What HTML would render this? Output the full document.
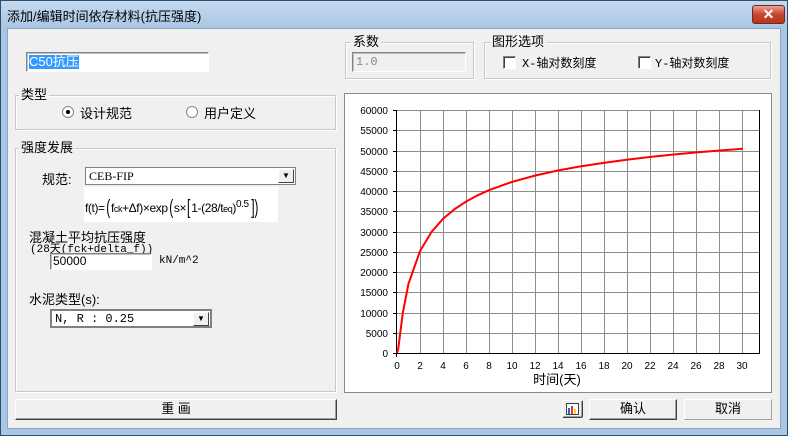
<!DOCTYPE html>
<html><head><meta charset="utf-8"><style>
*{margin:0;padding:0;box-sizing:border-box}
body{width:788px;height:436px;background:#6fa8d0;font-family:"Liberation Sans","Noto Sans CJK SC",sans-serif;font-size:12px;color:#000;position:relative;overflow:hidden}
.win{position:absolute;left:0;top:0;width:788px;height:436px;border:1px solid #2b4f6e;background:linear-gradient(#c5d9ee,#a9c6e4 28px)}
.client{position:absolute;left:7px;top:28px;width:774px;height:401px;background:#f0f0f0;border:1px solid #8aa6c0}
.a{position:absolute}
.title{left:7px;top:6px;font-size:13px}
.close{left:752px;top:5px;width:33px;height:19px;border:1px solid #6b2a22;border-radius:3px;background:linear-gradient(#e8a294,#c8452e 50%,#b8341d);color:#fff;font-weight:bold;text-align:center;font-size:14px;line-height:17px}
.grp{position:absolute;border:1px solid #c8c8c8;box-shadow:inset 1px 1px 0 #fff,1px 1px 0 #fff}
.lg{position:absolute;background:#f0f0f0;padding:0 2px;font-size:13px;top:-10px;left:5px;line-height:17px}
.inp{position:absolute;background:#fff;border:1px solid;border-color:#828282 #fff #fff #828282;box-shadow:inset 1px 1px 0 #c0c0c0}
.btn{position:absolute;background:#f0f0f0;border:1px solid;border-color:#fff #404040 #404040 #fff;box-shadow:inset -1px -1px 0 #a0a0a0;text-align:center;font-size:13px;line-height:18px}
.mono{font-family:"Liberation Mono","Noto Sans CJK SC",monospace;font-size:12px}
.cb{position:absolute;width:13px;height:13px;background:#fff;border:1px solid;border-color:#808080 #fff #fff #808080;box-shadow:inset 1px 1px 0 #404040}
.rad{position:absolute;width:12px;height:12px;border-radius:50%;background:#fff;border:1px solid #888}
.dd{position:absolute;top:1px;right:1px;width:16px;background:#f0f0f0;border:1px solid;border-color:#fff #404040 #404040 #fff;font-size:8px;text-align:center}
.big{font-size:20px;font-weight:100;display:inline-block;transform:scaleX(0.6);vertical-align:-2px}
</style></head><body>
<div class="win"></div>
<div class="a title">添加/编辑时间依存材料(抗压强度)</div>
<div class="a close">✕</div>
<div class="client"></div>

<div class="inp" style="left:26px;top:52px;width:183px;height:20px"><span style="position:absolute;left:2px;top:2px;background:#3399ff;color:#fff;font-size:13px;line-height:14px">C50抗压</span></div>

<div class="grp" style="left:345px;top:42px;width:129px;height:37px"><span class="lg">系数</span>
<div class="inp" style="left:6px;top:9px;width:114px;height:20px;background:#f0f0f0"><span class="mono" style="position:absolute;left:3px;top:2px;color:#8a8a8a">1.0</span></div></div>

<div class="grp" style="left:484px;top:42px;width:287px;height:37px"><span class="lg">图形选项</span>
<div class="cb" style="left:18px;top:13px"></div><span class="a mono" style="left:37px;top:11px;font-size:12px">X-轴对数刻度</span>
<div class="cb" style="left:153px;top:13px"></div><span class="a mono" style="left:170px;top:11px;font-size:12px">Y-轴对数刻度</span></div>

<div class="grp" style="left:15px;top:95px;width:321px;height:35px"><span class="lg" style="left:3px">类型</span>
<div class="rad" style="left:46px;top:10px"><div style="position:absolute;left:3px;top:3px;width:4px;height:4px;border-radius:50%;background:#000"></div></div>
<span class="a" style="left:64px;top:7px;font-size:13px">设计规范</span>
<div class="rad" style="left:170px;top:10px"></div>
<span class="a" style="left:188px;top:7px;font-size:13px">用户定义</span></div>

<div class="grp" style="left:15px;top:148px;width:321px;height:244px"><span class="lg" style="left:3px">强度发展</span></div>
<span class="a" style="left:42px;top:169px;font-size:13px">规范:</span>
<div class="inp" style="left:85px;top:167px;width:211px;height:18px;border-color:#808080;box-shadow:none"><span class="mono" style="position:absolute;left:3px;top:1px;font-family:'Liberation Serif',serif">CEB-FIP</span><div class="dd" style="height:14px;line-height:12px">▼</div></div>
<div class="a" style="left:84px;top:187px;width:194px;height:35px;background:#fff;font-size:12px;line-height:35px;padding-left:1px;letter-spacing:-0.4px;white-space:nowrap">f(t)=<span class="big">(</span>f<span style="font-size:9px">ck</span>+Δf)×exp<span class="big">(</span>s×<span class="big">[</span>1-(28/t<span style="font-size:9px">eq</span>)<sup style="font-size:10px">0.5</sup><span class="big">])</span></div>
<span class="a" style="left:29px;top:227px;font-size:13px">混凝土平均抗压强度</span>
<span class="a mono" style="left:30px;top:240px;font-size:11px">(28天(fck+delta_f))</span>
<div class="inp" style="left:50px;top:253px;width:102px;height:17px"><span style="position:absolute;left:2px;top:0px">50000</span></div>
<span class="a mono" style="left:159px;top:255px;font-size:11px">kN/m^2</span>
<span class="a" style="left:29px;top:289px;font-size:13px">水泥类型(s):</span>
<div class="inp" style="left:50px;top:309px;width:162px;height:19px;border:2px solid #808080;box-shadow:none"><span class="mono" style="position:absolute;left:3px;top:1px">N, R : 0.25</span><div class="dd" style="height:14px;line-height:12px">▼</div></div>

<div class="btn" style="left:15px;top:399px;width:322px;height:21px">重 画</div>

<div class="a" style="left:344px;top:93px;width:428px;height:300px;background:#fff;border:1px solid #8a8a8a"></div>
<svg class="a" style="left:0;top:0" width="788" height="436">
<g stroke="#8c8c8c" stroke-width="1">
<line x1="397" y1="110.5" x2="759" y2="110.5"/><line x1="397" y1="130.5" x2="759" y2="130.5"/><line x1="397" y1="151.5" x2="759" y2="151.5"/><line x1="397" y1="171.5" x2="759" y2="171.5"/><line x1="397" y1="191.5" x2="759" y2="191.5"/><line x1="397" y1="211.5" x2="759" y2="211.5"/><line x1="397" y1="232.5" x2="759" y2="232.5"/><line x1="397" y1="252.5" x2="759" y2="252.5"/><line x1="397" y1="272.5" x2="759" y2="272.5"/><line x1="397" y1="292.5" x2="759" y2="292.5"/><line x1="397" y1="313.5" x2="759" y2="313.5"/><line x1="397" y1="333.5" x2="759" y2="333.5"/>
<line x1="420.5" y1="110" x2="420.5" y2="353"/><line x1="443.5" y1="110" x2="443.5" y2="353"/><line x1="466.5" y1="110" x2="466.5" y2="353"/><line x1="489.5" y1="110" x2="489.5" y2="353"/><line x1="512.5" y1="110" x2="512.5" y2="353"/><line x1="535.5" y1="110" x2="535.5" y2="353"/><line x1="558.5" y1="110" x2="558.5" y2="353"/><line x1="581.5" y1="110" x2="581.5" y2="353"/><line x1="604.5" y1="110" x2="604.5" y2="353"/><line x1="627.5" y1="110" x2="627.5" y2="353"/><line x1="650.5" y1="110" x2="650.5" y2="353"/><line x1="673.5" y1="110" x2="673.5" y2="353"/><line x1="696.5" y1="110" x2="696.5" y2="353"/><line x1="719.5" y1="110" x2="719.5" y2="353"/><line x1="742.5" y1="110" x2="742.5" y2="353"/>
</g>
<g stroke="#000" stroke-width="1">
<line x1="759.5" y1="110" x2="759.5" y2="354"/>
<line x1="396.5" y1="110" x2="396.5" y2="357"/><line x1="393" y1="353.5" x2="759" y2="353.5"/>
<line x1="393" y1="110.5" x2="397" y2="110.5"/><line x1="393" y1="130.5" x2="397" y2="130.5"/><line x1="393" y1="151.5" x2="397" y2="151.5"/><line x1="393" y1="171.5" x2="397" y2="171.5"/><line x1="393" y1="191.5" x2="397" y2="191.5"/><line x1="393" y1="211.5" x2="397" y2="211.5"/><line x1="393" y1="232.5" x2="397" y2="232.5"/><line x1="393" y1="252.5" x2="397" y2="252.5"/><line x1="393" y1="272.5" x2="397" y2="272.5"/><line x1="393" y1="292.5" x2="397" y2="292.5"/><line x1="393" y1="313.5" x2="397" y2="313.5"/><line x1="393" y1="333.5" x2="397" y2="333.5"/>
</g>
<polyline fill="none" stroke="#ff0000" stroke-width="2" points="397,353 398.2,349 402.8,312.9 408.5,283.7 420.1,250.9 431.6,231.9 443.1,218.7 454.7,209.1 466.2,201.5 477.7,195.3 489.2,190.1 512.3,181.8 535.4,175.5 558.4,170.4 581.5,166.2 604.5,162.7 627.6,159.6 650.7,156.9 673.7,154.5 696.8,152.4 719.8,150.5 742.9,148.8"/>
<g font-family="Liberation Sans, sans-serif" font-size="10" text-anchor="end" fill="#000">
<text x="388" y="114">60000</text><text x="388" y="134">55000</text><text x="388" y="155">50000</text><text x="388" y="175">45000</text><text x="388" y="195">40000</text><text x="388" y="215">35000</text><text x="388" y="236">30000</text><text x="388" y="256">25000</text><text x="388" y="276">20000</text><text x="388" y="296">15000</text><text x="388" y="317">10000</text><text x="388" y="337">5000</text><text x="388" y="357">0</text>
</g>
<g font-family="Liberation Sans, sans-serif" font-size="10" text-anchor="middle">
<text x="397" y="369">0</text><text x="420" y="369">2</text><text x="443" y="369">4</text><text x="466" y="369">6</text><text x="489" y="369">8</text><text x="512" y="369">10</text><text x="535" y="369">12</text><text x="558" y="369">14</text><text x="581" y="369">16</text><text x="604" y="369">18</text><text x="627" y="369">20</text><text x="650" y="369">22</text><text x="673" y="369">24</text><text x="696" y="369">26</text><text x="719" y="369">28</text><text x="742" y="369">30</text>
</g>
<text x="557" y="384" font-family="Liberation Sans, Noto Sans CJK SC, sans-serif" font-size="13" text-anchor="middle">时间(天)</text>
</svg>

<div class="btn" style="left:562px;top:400px;width:21px;height:18px;border-radius:2px"><svg width="13" height="12" style="margin-top:2px"><rect x="0.5" y="0.5" width="12" height="11" fill="#fff" stroke="#345"/><rect x="2" y="5" width="2" height="6" fill="#36c"/><rect x="5" y="3" width="2" height="8" fill="#e33"/><rect x="8" y="6" width="2" height="5" fill="#fc3"/></svg></div>
<div class="btn" style="left:589px;top:399px;width:88px;height:21px">确认</div>
<div class="btn" style="left:684px;top:399px;width:88px;height:21px;border-color:#fff #a0a0a0 #a0a0a0 #fff;box-shadow:none">取消</div>
</body></html>
